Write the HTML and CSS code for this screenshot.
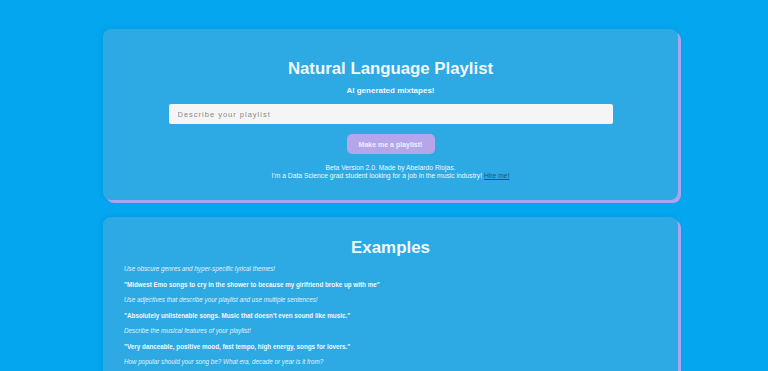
FILE: index.html
```html
<!DOCTYPE html>
<html lang="en">
<head>
    <meta charset="UTF-8">
    <meta name="viewport" content="width=device-width, initial-scale=1.0">
    <title>Natural Language Playlist</title>
    <link rel="stylesheet" href="styles.css">
</head>
<body>
    <div class="page">
        <div class="card">
            <h1>Natural Language Playlist</h1>
            <p class="subtitle">AI generated mixtapes!</p>
            <form class="playlist-form">
                <input type="text" placeholder="Describe your playlist">
                <button type="button">Make me a playlist!</button>
            </form>
            <p class="credits">
                Beta Version 2.0. Made by Abelardo Riojas.<br>
                I'm a Data Science grad student looking for a job in the music industry! <a href="#">Hire me!</a>
            </p>
        </div>

        <div class="card examples">
            <h2>Examples</h2>
            <p class="tip">Use obscure genres and hyper-specific lyrical themes!</p>
            <p class="prompt">"Midwest Emo songs to cry in the shower to because my girlfriend broke up with me"</p>
            <p class="tip">Use adjectives that describe your playlist and use multiple sentences!</p>
            <p class="prompt">"Absolutely unlistenable songs. Music that doesn't even sound like music."</p>
            <p class="tip">Describe the musical features of your playlist!</p>
            <p class="prompt">"Very danceable, positive mood, fast tempo, high energy, songs for lovers."</p>
            <p class="tip">How popular should your song be? What era, decade or year is it from?</p>
        </div>
    </div>
</body>
</html>
```

FILE: styles.css
```css
body {
    font-family: "Liberation Sans", Arial, sans-serif;
    margin: 0;
    background-color: #03a6ef;
    color: #f2f8fc;
}

.page {
    width: 575px;
    margin: 0 0 0 103px;
    padding-top: 29px;
}

.card {
    background-color: #2da9e4;
    border-radius: 8px;
    box-shadow: 3px 3px 0 #aca4ee, 0 0 6px rgba(0, 0, 0, 0.08);
    padding: 29px 20px 20px;
    text-align: center;
    margin-bottom: 17px;
}

h1 {
    font-size: 16.8px;
    margin: 0 0 6px;
    line-height: 22px;
}

.subtitle {
    font-size: 8px;
    line-height: 10px;
    font-weight: bold;
    margin: 0 0 8px;
}

.playlist-form {
    display: flex;
    flex-direction: column;
    align-items: center;
    gap: 10px;
}

.playlist-form input {
    width: 444px;
    height: 20px;
    box-sizing: border-box;
    padding: 0 9px;
    border: none;
    border-radius: 2px;
    background-color: #f5f5f5;
    font-family: "Liberation Sans", Arial, sans-serif;
    font-size: 7.5px;
    letter-spacing: 1px;
}

.playlist-form input::placeholder {
    color: #8a8a8a;
}

.playlist-form button {
    width: 88px;
    height: 20px;
    padding: 0;
    background-color: #b5a5ea;
    color: #f2eefc;
    border: none;
    border-radius: 5px;
    font-family: "Liberation Sans", Arial, sans-serif;
    font-size: 7px;
    font-weight: bold;
}

.credits {
    font-size: 6.75px;
    line-height: 8px;
    margin: 10px 0 0;
}

.credits a {
    color: #2c4f7e;
}

.examples {
    text-align: left;
    padding: 20px 21px 10px;
}

h2 {
    font-size: 16.9px;
    text-align: center;
    margin: 0 0 6px;
    line-height: 22px;
}

.examples p {
    font-size: 6.3px;
    line-height: 8px;
    margin: 0 0 7.5px;
}

.tip {
    font-style: italic;
    color: #e2f1fa;
}

.prompt {
    font-weight: bold;
}
```
